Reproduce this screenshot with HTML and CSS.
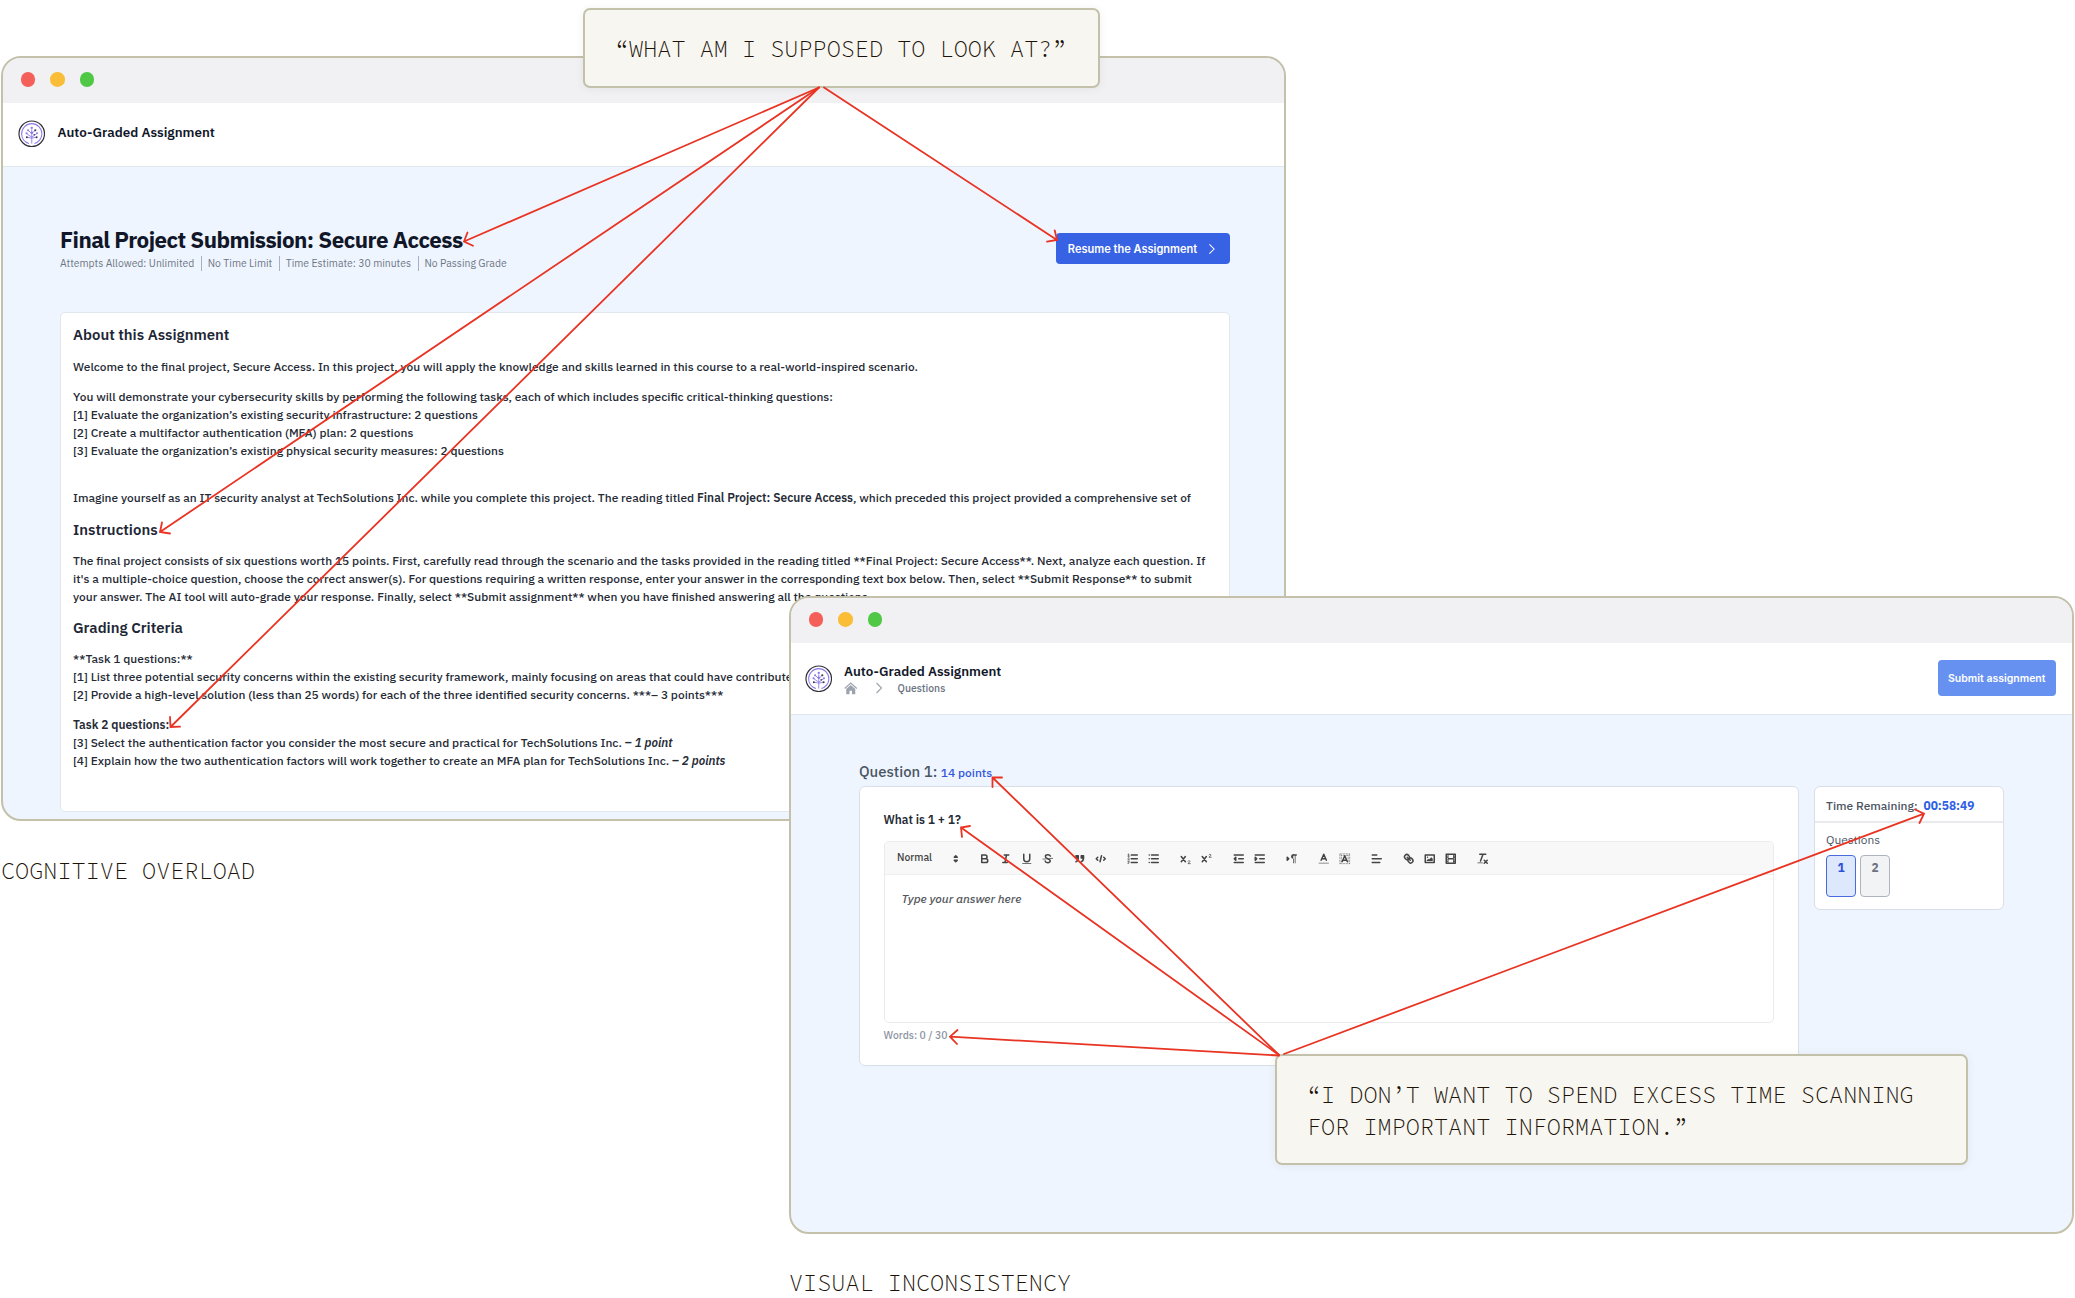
FILE: index.html
```
<!DOCTYPE html>
<html lang="en">
<head>
<meta charset="utf-8">
<title>Usability findings</title>
<link rel="stylesheet" href="styles.css">
</head>
<body>
<svg class="defs" aria-hidden="true">
  <symbol id="logo" viewBox="0 0 28 28">
    <circle cx="14" cy="14" r="13" fill="#fff" stroke="#2f2f3a" stroke-width="1.2"/>
    <circle cx="14" cy="14" r="10.3" fill="none" stroke="#8e7bea" stroke-width="1.1" stroke-dasharray="59 5.7" stroke-dashoffset="-19"/>
    <g fill="none" stroke="#8e7bea" stroke-width=".9"><path d="M14 24V9.500M14 17.500 9 14M14 17.500 19 14M14 14 10.500 10.500M14 14 17.500 10.500M9 17.500 14 18.500 19 17.500"/></g>
    <g fill="#8e7bea"><circle cx="14" cy="8" r="1.200"/><circle cx="10.300" cy="10.500" r="1.100"/><circle cx="8.700" cy="13.500" r="1.100"/><circle cx="14" cy="13" r="1.300"/><circle cx="19.300" cy="13.500" r="1.100"/></g>
    <g fill="#3a3650"><circle cx="17.600" cy="10.400" r="1.100"/><circle cx="9" cy="17.500" r="1"/><circle cx="19" cy="17.500" r="1"/><circle cx="16.500" cy="15" r=".8"/></g>
  </symbol>
  <symbol id="chevron" viewBox="0 0 8 12"><path d="M1.500 1 6.500 6l-5 5" fill="none" stroke="currentColor" stroke-width="1.100"/></symbol>
</svg>

<main class="board">
  <section class="window window-overview">
    <div class="titlebar"><i class="dot red"></i><i class="dot amber"></i><i class="dot green"></i></div>
    <header class="app-header">
      <svg class="logo"><use href="#logo"/></svg>
      <div class="app-name">Auto-Graded Assignment</div>
    </header>
    <div class="overview">
      <div class="overview-head">
        <div>
          <h1>Final Project Submission: Secure Access</h1>
          <ul class="meta"><li>Attempts Allowed: Unlimited</li><li>No Time Limit</li><li>Time Estimate: 30 minutes</li><li>No Passing Grade</li></ul>
        </div>
        <button class="btn resume">Resume the Assignment <svg class="go"><use href="#chevron"/></svg></button>
      </div>
      <article class="brief">
        <h2>About this Assignment</h2>
        <p>Welcome to the final project, Secure Access. In this project, you will apply the knowledge and skills learned in this course to a real-world-inspired scenario.</p>
        <p>You will demonstrate your cybersecurity skills by performing the following tasks, each of which includes specific critical-thinking questions:<br>[1] Evaluate the organization’s existing security infrastructure: 2 questions<br>[2] Create a multifactor authentication (MFA) plan: 2 questions<br>[3] Evaluate the organization’s existing physical security measures: 2 questions</p>
        <p class="spaced">Imagine yourself as an IT security analyst at TechSolutions Inc. while you complete this project. The reading titled <b>Final Project: Secure Access</b>, which preceded this project provided a comprehensive set of</p>
        <h2>Instructions</h2>
        <p>The final project consists of six questions worth 15 points. First, carefully read through the scenario and the tasks provided in the reading titled **Final Project: Secure Access**. Next, analyze each question. If<br>it's a multiple-choice question, choose the correct answer(s). For questions requiring a written response, enter your answer in the corresponding text box below. Then, select **Submit Response** to submit<br>your answer. The AI tool will auto-grade your response. Finally, select **Submit assignment** when you have finished answering all the questions.</p>
        <h2>Grading Criteria</h2>
        <p>**Task 1 questions:**<br>[1] List three potential security concerns within the existing security framework, mainly focusing on areas that could have contribute<br>[2] Provide a high-level solution (less than 25 words) for each of the three identified security concerns. ***– 3 points***</p>
        <p><b>Task 2 questions:</b><br>[3] Select the authentication factor you consider the most secure and practical for TechSolutions Inc. <b>– <em>1 point</em></b><br>[4] Explain how the two authentication factors will work together to create an MFA plan for TechSolutions Inc. <b>– <em>2 points</em></b></p>
      </article>
    </div>
  </section>
  <div class="caption caption-overview">COGNITIVE OVERLOAD</div>

  <section class="window window-question">
    <div class="titlebar"><i class="dot red"></i><i class="dot amber"></i><i class="dot green"></i></div>
    <header class="app-header">
      <svg class="logo"><use href="#logo"/></svg>
      <div class="app-title">
        <div class="app-name">Auto-Graded Assignment</div>
        <nav class="crumbs">
          <svg class="home" viewBox="0 0 14 13"><path d="M7 3.200 2.300 7.300V12.700H5.700V9h2.600v3.700h3.400V7.300Z" fill="#9ca3af"/><path d="M.7 6.800 7 1l6.300 5.800" fill="none" stroke="#9ca3af" stroke-width="1.200"/></svg>
          <svg class="sep"><use href="#chevron"/></svg>
          <span>Questions</span>
        </nav>
      </div>
      <button class="btn submit">Submit assignment</button>
    </header>
    <div class="question-page">
      <div class="question-col">
        <div class="question-head">Question 1: <span>14 points</span></div>
        <div class="question-card">
          <div class="prompt">What is 1 + 1?</div>
          <div class="editor">
            <div class="toolbar">
              <span class="format">Normal<svg class="ic" viewBox="0 0 18 18"><path class="f s" d="M7 11 9 13 11 11ZM7 7 9 5 11 7Z"/></svg></span>
              <span class="group">
                <svg class="ic" viewBox="0 0 18 18"><path class="s" d="M5,4H9.500A2.500,2.500,0,0,1,9.500,9H5ZM5,9h5.500A2.500,2.500,0,0,1,10.500,14H5Z"/></svg>
                <svg class="ic" viewBox="0 0 18 18"><path class="s" d="M7 4H13M5 14H11M8 14 10 4"/></svg>
                <svg class="ic" viewBox="0 0 18 18"><path class="s" d="M5,3V9a4.012,4.012,0,0,0,4,4H9a4.012,4.012,0,0,0,4-4V3"/><path class="f" d="M3 15H15V16H3Z"/></svg>
                <svg class="ic" viewBox="0 0 18 18"><path class="s" d="M12.500 5.500C11.800 3 6 2.800 5.800 5.800 5.700 7.600 7.500 8.300 9 8.900M9 9.200C11 9.800 12.500 10.400 12.300 12 12 15 6 15 5.500 12"/><path class="s thin" d="M2.500 9.500 15.500 8.500"/></svg>
              </span>
              <span class="group">
                <svg class="ic" viewBox="0 0 18 18"><path class="f s" d="M4 5H7V8H4ZM11 5h3V8H11Z"/><path class="f s" d="M7,8c0,4.031-3,5-3,5M14,8c0,4.031-3,5-3,5"/></svg>
                <svg class="ic" viewBox="0 0 18 18"><path class="s" d="M5 7 3 9 5 11M13 7 15 9 13 11M10 5 8 13"/></svg>
              </span>
              <span class="group">
                <svg class="ic" viewBox="0 0 18 18"><path class="s" d="M7 4H15M7 9H15M7 14H15"/><path class="s thin" d="M2.500 5.500H4.500M3.500 5.500V2.500L2.700 2.900M2.500 8C3 7 4.500 7.300 4.300 8.300L2.500 10.500H4.500M2.500 12.500H4.300L3.300 13.800C5 13.800 4.600 15.800 2.500 15.300"/></svg>
                <svg class="ic" viewBox="0 0 18 18"><path class="s" d="M6 4H15M6 9H15M6 14H15M3 4H3M3 9H3M3 14H3"/></svg>
              </span>
              <span class="group">
                <svg class="ic" viewBox="0 0 18 18"><path class="s" d="M3 6 8.500 13M8.500 6 3 13"/><path class="s thin" d="M12 12.300C12.500 11 14.800 11.300 14.500 12.700L12 15.500H15"/></svg>
                <svg class="ic" viewBox="0 0 18 18"><path class="s" d="M3 6 8.500 13M8.500 6 3 13"/><path class="s thin" d="M12 3.800C12.500 2.500 14.800 2.800 14.500 4.200L12 7H15"/></svg>
              </span>
              <span class="group">
                <svg class="ic" viewBox="0 0 18 18"><path class="s" d="M3 14H15M3 4H15M9 9H15"/><path class="f s" d="M5 7V11L3 9Z"/></svg>
                <svg class="ic" viewBox="0 0 18 18"><path class="s" d="M3 14H15M3 4H15M9 9H15"/><path class="f s" d="M3 7V11L5 9Z"/></svg>
              </span>
              <span class="group">
                <svg class="ic" viewBox="0 0 18 18"><path class="f s" d="M3 11 5 9 3 7Z"/><path class="s" d="M11 4H15"/><path class="f" d="M11,3a3,3,0,0,0,0,6h1V3ZM11 4h1V15H11ZM13 4h1V15H13Z"/></svg>
              </span>
              <span class="group">
                <svg class="ic" viewBox="0 0 18 18"><path class="s faint" d="M3 15H15"/><path class="s" d="M5.500 11 9 3 12.500 11M11.600 9H6.400"/></svg>
                <svg class="ic" viewBox="0 0 18 18"><path class="s dots" d="M2.500 2.500H15.500M2.500 15.500H15.500M2.500 2.500V15.500M15.500 2.500V15.500M4.500 4.500H13.500M4.500 4.500V13.500M13.500 4.500V13.500"/><path class="s" d="M5.500 13 9 5 12.500 13M11.600 11H6.400"/></svg>
              </span>
              <span class="group">
                <svg class="ic" viewBox="0 0 18 18"><path class="s" d="M3 9H15M3 14H13M3 4H9"/></svg>
              </span>
              <span class="group">
                <svg class="ic" viewBox="0 0 18 18"><path class="s" d="M7 7 11 11M8.900,4.577a3.476,3.476,0,0,1,.36,4.679A3.476,3.476,0,0,1,4.577,8.900C3.185,7.500,2.035,6.400,4.217,4.217S7.500,3.185,8.900,4.577ZM13.423,9.100a3.476,3.476,0,0,0-4.679-.36,3.476,3.476,0,0,0,.36,4.679c1.392,1.392,2.500,2.542,4.679.36S14.815,10.500,13.423,9.100Z"/></svg>
                <svg class="ic" viewBox="0 0 18 18"><path class="s" d="M3 4H15V14H3Z"/><circle class="f" cx="6" cy="7" r="1"/><path class="f" d="M5 12V11L7 9 8 10 11 7 13 9V12Z"/></svg>
                <svg class="ic" viewBox="0 0 18 18"><path class="s" d="M3 3H15V15H3Z"/><path class="f" d="M5 3h1V15H5ZM12 3h1V15H12ZM5 8h8v2H5ZM3 5h3v1H3ZM3 7h3v1H3ZM3 10h3v1H3ZM3 12h3v1H3ZM12 5h3v1H12ZM12 7h3v1H12ZM12 10h3v1H12ZM12 12h3v1H12Z"/></svg>
              </span>
              <span class="group">
                <svg class="ic" viewBox="0 0 18 18"><path class="s" d="M5 3H13M6 12 9.350 3M11 11 15 15M15 11 11 15"/><path class="f" d="M2 14H9V15H2Z"/></svg>
              </span>
            </div>
            <div class="answer">Type your answer here</div>
          </div>
          <div class="words">Words: 0 / 30</div>
        </div>
      </div>
      <aside class="progress">
        <div class="timer">Time Remaining: <b>00:58:49</b></div>
        <div class="list">
          <div class="list-title">Questions</div>
          <div class="tiles"><span class="tile current">1</span><span class="tile">2</span></div>
        </div>
      </aside>
    </div>
  </section>
  <div class="caption caption-question">VISUAL INCONSISTENCY</div>

  <div class="callout callout-overview">“WHAT AM I SUPPOSED TO LOOK AT?”</div>
  <div class="callout callout-question">“I DON’T WANT TO SPEND EXCESS TIME SCANNING<br>FOR IMPORTANT INFORMATION.”</div>

  <svg class="arrows" viewBox="0 0 2075 1298">
    <path d="M819 87.500 464 241.500M467.500 232.500 464 241.500 473 245.700"/>
    <path d="M819 87.500 160 532M162 522.500 160 532 170 533.500"/>
    <path d="M819 87.500 170.500 727M170 717 170.500 727 180 726.700"/>
    <path d="M824 87.500 1057 240M1054.700 230.300 1057 240 1047 241.700"/>
    <path d="M1279 1055 992.500 777.500M1002 777.500H992.500V787"/>
    <path d="M1279 1055 961 827.500M970 826 961 827.500 962 837"/>
    <path d="M1279 1055.500 950 1036.700M957.500 1030 950 1036.700 957 1044"/>
    <path d="M1284 1054 1924 813.700M1915 809.500 1924 813.700 1919.500 823"/>
  </svg>
</main>
</body>
</html>
```

FILE: styles.css
```
* { box-sizing: border-box; }
body { margin: 0; background: #fff; }
h1, h2, p, ul { margin: 0; padding: 0; font-weight: inherit; }
.defs { position: absolute; width: 0; height: 0; }

.board {
  position: relative;
  width: 2075px;
  height: 1298px;
  overflow: hidden;
  font-family: "IBM Plex Sans", "Noto Sans", sans-serif;
  font-weight: 500;
  font-size: 11.95px;
  line-height: 17.93px;
  color: #262b36;
}

/* Browser windows placed on the board */
.window {
  position: absolute;
  display: flex;
  flex-direction: column;
  border: 2px solid #c4c1aa;
  border-radius: 20px;
  overflow: hidden;
  background: #eef5fe;
}
.window-overview { left: 1px; top: 56px; width: 1285px; height: 765px; }
.window-question { left: 789px; top: 596px; width: 1285px; height: 638px; }

.titlebar {
  flex: none;
  display: flex;
  align-items: center;
  gap: 15px;
  height: 45px;
  padding: 0 0 1.500px 17.500px;
  background: #f1f1f4;
}
.dot { width: 14.600px; height: 14.600px; border-radius: 50%; }
.red { background: #f55f5a; }
.amber { background: #f9bd38; }
.green { background: #50c845; }

.app-header {
  flex: none;
  display: flex;
  align-items: center;
  gap: 12px;
  height: 63.500px;
  padding: 0 0 1px 15px;
  border-bottom: 1.500px solid #dfe6ee;
  background: #fff;
}
.logo { width: 27.500px; height: 27.500px; }
.app-name { font-size: 13.400px; line-height: 20px; font-weight: 600; color: #111729; }
.window-overview .app-name { margin-bottom: 4.500px; }
.window-question .app-header { height: 71.500px; padding: 0 16px 0 14px; gap: 11.500px; }

.btn {
  display: flex;
  align-items: center;
  justify-content: center;
  border: 0;
  border-radius: 4px;
  padding: 0;
  color: #fff;
  font-family: Inter, sans-serif;
  font-weight: 600;
}

/* Assignment overview */
.overview { padding: 58.500px 54px 0 57px; }
.overview-head { display: flex; justify-content: space-between; }
h1 { font-size: 22.400px; line-height: 29px; font-weight: 700; letter-spacing: -.56px; color: #111729; }
.meta { display: flex; list-style: none; font-size: 10.400px; line-height: 15px; font-weight: 400; color: #6e7685; margin-top: 2px; }
.meta li + li { margin-left: 6.500px; padding-left: 6px; border-left: 1px solid #a9b1bd; }
.resume { width: 173.500px; height: 31px; margin: 8px .5px 0 0; padding-right: 2px; gap: 11px; background: #3862e4; font-size: 11.040px; }
.go { width: 7.500px; height: 12px; }

.brief {
  height: 500px;
  margin-top: 41px;
  padding: 12.300px 12px 0 12px;
  border: 1.500px solid #e2e7ee;
  border-radius: 5px;
  background: #fff;
  white-space: nowrap;
}
h2 { font-size: 14.930px; line-height: 20.900px; font-weight: 600; color: #1e2736; margin-bottom: 11.500px; }
.brief p { margin-bottom: 12.200px; }
.brief p.spaced { margin-top: 29.880px; }
.brief b { font-weight: 600; }

/* Question view */
.app-title { flex: 1; }
.crumbs { display: flex; align-items: center; font-size: 10.400px; line-height: 14px; color: #6b7280; }
.home { width: 13.500px; height: 12.500px; }
.sep { width: 8px; height: 12px; margin: 0 15px 0 17px; color: #9ca3af; }
.submit { width: 118.500px; height: 36px; background: #6691f1; font-size: 10.500px; }

.question-page { display: flex; align-items: flex-start; gap: 15px; padding: 43.500px 0 0 68px; }
.question-col { width: 939.500px; }
.question-head { font-size: 14.930px; line-height: 27px; color: #4b5563; }
.question-head span { font-size: 11.950px; color: #3458dc; }
.question-card, .progress { background: #fff; border: 1px solid #d9dfe8; border-radius: 6px; }
.question-card { height: 279.500px; padding: 24px 23.500px 0; }
.prompt { font-weight: 600; }
.editor { height: 182px; margin-top: 12px; border: 1px solid #eaebed; border-radius: 5px; }
.toolbar { display: flex; align-items: center; gap: 11px; height: 33px; padding: 1px 0 0 12.500px; background: #f8f8f8; border-bottom: 1.500px solid #efefef; border-radius: 5px 5px 0 0; }
.format { display: flex; align-items: center; justify-content: space-between; width: 65.500px; margin-right: 4px; font-size: 10.400px; color: #444; }
.group { display: flex; gap: 7.500px; margin-right: 7.500px; }
.ic { display: block; width: 13.500px; height: 13.500px; }
.s { fill: none; stroke: #444; stroke-width: 2; stroke-linecap: round; stroke-linejoin: round; }
.f { fill: #444; }
.thin { stroke-width: 1; }
.faint { opacity: .4; }
.dots { stroke-width: 1; stroke-dasharray: 1 1; stroke-linecap: butt; }
.answer { padding: 15px 17px; font-size: 11.950px; font-style: italic; color: #55585e; }
.words { margin-top: 4.500px; font-size: 10.400px; color: #8f96a3; }

.progress { width: 190.500px; height: 124px; margin-top: 27.500px; }
.timer { height: 36.500px; padding: 10.500px 0 0 11.500px; border-bottom: 2px solid #e8eaee; color: #4b5563; }
.timer b { margin-left: 3px; font-weight: 700; color: #2f5fe5; }
.list { padding: 7.500px 11.500px; }
.list-title { font-weight: 400; color: #4b5563; }
.tiles { display: flex; gap: 4px; margin-top: 7px; }
.tile { width: 30px; height: 42px; padding-top: 3px; border: 1px solid #aeb3bd; border-radius: 4px; background: #f2f3f5; text-align: center; font-weight: 700; color: #6b7280; }
.current { border-color: #4a6be0; background: #dde8fc; color: #2e50dc; }

/* Annotations */
.caption, .callout { font-family: "Source Code Pro", "Liberation Mono", monospace; font-weight: 300; font-size: 23.530px; line-height: 32px; color: #1c1208; white-space: nowrap; }
.caption { position: absolute; }
.caption-overview { left: 1px; top: 855px; }
.caption-question { left: 789px; top: 1267px; }
.callout { position: absolute; border: 2px solid #c4c1aa; border-radius: 7px; background: #f7f6f1; box-shadow: 0 1px 8px rgba(60, 60, 40, .07); padding-left: 30px; }
.callout-overview { left: 583px; top: 8px; width: 517px; height: 80px; padding-top: 22.500px; }
.callout-question { left: 1275px; top: 1054px; width: 693px; height: 111px; padding-top: 23px; }
.arrows { position: absolute; inset: 0; width: 2075px; height: 1298px; pointer-events: none; fill: none; stroke: #e93323; stroke-width: 1.800; stroke-linecap: round; }
```
